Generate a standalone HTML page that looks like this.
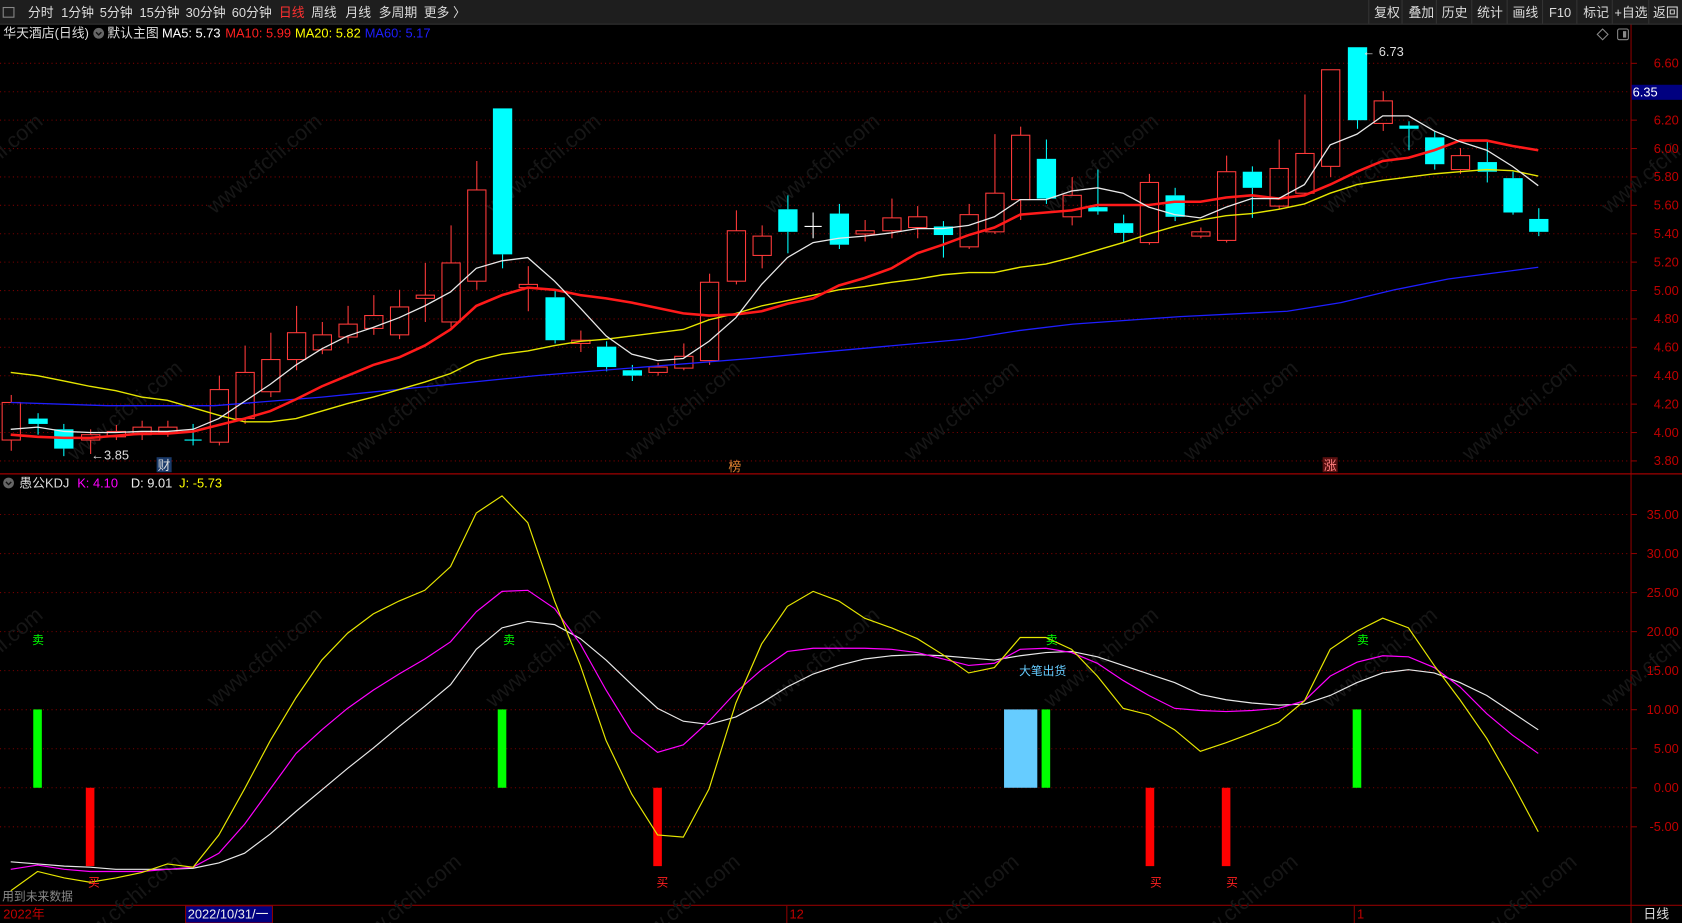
<!DOCTYPE html>
<html><head><meta charset="utf-8">
<style>
html,body{margin:0;padding:0;background:#000;width:1682px;height:923px;overflow:hidden}
svg{display:block}
text{font-family:"Liberation Sans","Noto Sans CJK SC",sans-serif;}
</style></head><body>
<svg id="s" width="1682" height="923" viewBox="0 0 1568 860" preserveAspectRatio="none" xmlns="http://www.w3.org/2000/svg">
<rect width="1568" height="860" fill="#000"/>
<rect x="0" y="0" width="1568" height="22" fill="#1e1e1e"/>
<line x1="0" y1="22.5" x2="1568" y2="22.5" stroke="#3a3a3a"/>
<rect x="3" y="7" width="10" height="9" fill="none" stroke="#888" stroke-width="1"/>
<g font-size="12" fill="#ddd">
<text x="26" y="16">分时</text><text x="57" y="16">1分钟</text><text x="93" y="16">5分钟</text><text x="130" y="16">15分钟</text><text x="173" y="16">30分钟</text><text x="216" y="16">60分钟</text>
<text x="260" y="16" fill="#ff3030">日线</text><text x="290" y="16">周线</text><text x="322" y="16">月线</text><text x="353" y="16">多周期</text><text x="395" y="16">更多 〉</text>
<text x="1281" y="16">复权</text><text x="1313" y="16">叠加</text><text x="1344" y="16">历史</text><text x="1377" y="16">统计</text><text x="1410" y="16">画线</text><text x="1444" y="16">F10</text><text x="1476" y="16">标记</text><text x="1505" y="16">+自选</text><text x="1541" y="16">返回</text>
</g>
<g stroke="#333"><line x1="1276" y1="0" x2="1276" y2="22"/><line x1="1307" y1="0" x2="1307" y2="22"/><line x1="1339" y1="0" x2="1339" y2="22"/><line x1="1372" y1="0" x2="1372" y2="22"/><line x1="1405" y1="0" x2="1405" y2="22"/><line x1="1438" y1="0" x2="1438" y2="22"/><line x1="1470" y1="0" x2="1470" y2="22"/><line x1="1503" y1="0" x2="1503" y2="22"/><line x1="1537" y1="0" x2="1537" y2="22"/></g>
<g font-size="12">
<text x="3" y="35" fill="#ddd">华天酒店(日线)</text>
<circle cx="92" cy="31" r="5" fill="#666"/><path d="M89.5 30l2.5 2.5 2.5-2.5" stroke="#111" fill="none" stroke-width="1.3"/>
<text x="100" y="35" fill="#ddd">默认主图</text>
<text x="151" y="35" fill="#fff">MA5: 5.73</text>
<text x="210" y="35" fill="#ff2020">MA10: 5.99</text>
<text x="275" y="35" fill="#ffff00">MA20: 5.82</text>
<text x="340" y="35" fill="#1e1eff">MA60: 5.17</text>
</g>
<path d="M1494 27l5 5-5 5-5-5z" fill="none" stroke="#888"/>
<rect x="1508" y="27" width="10" height="10" rx="1.5" fill="none" stroke="#888"/><rect x="1513" y="29" width="3" height="6" fill="#888"/>
<line x1="1520.5" y1="23" x2="1520.5" y2="860" stroke="#8b0000"/>
<line x1="0" y1="441.5" x2="1568" y2="441.5" stroke="#a00000" stroke-width="1.2"/>
<line x1="0" y1="843.5" x2="1568" y2="843.5" stroke="#8b0000"/>
<g id="grid"></g>
<g id="wm" font-size="20" fill="#161616"></g>
<g id="candles"></g>
<g id="lines" fill="none"></g>
<g id="kdj" fill="none"></g>
<g font-size="12" fill="#c00000" text-anchor="end" id="plab"></g>
<rect x="1521" y="79" width="47" height="14" fill="#000080"/>
<text x="1522" y="90" font-size="12" fill="#fff">6.35</text>
<text x="1270" y="52" font-size="12" fill="#ddd">← 6.73</text>
<text x="85" y="428" font-size="12" fill="#ddd">←3.85</text>
<rect x="146" y="426" width="14" height="14" fill="#1a3a6a"/><text x="147" y="438" font-size="12" fill="#ddd">财</text>
<text x="679" y="439" font-size="12" fill="#e08030">榜</text>
<rect x="1233" y="426" width="14" height="14" fill="#5a1010"/><text x="1234" y="438" font-size="12" fill="#ff8080">涨</text>
<circle cx="8" cy="450" r="5" fill="#666"/><path d="M5.5 449l2.5 2.5 2.5-2.5" stroke="#111" fill="none" stroke-width="1.3"/>
<g font-size="12"><text x="18" y="454" fill="#ddd">愚公KDJ</text><text x="72" y="454" fill="#ff00ff">K: 4.10</text><text x="122" y="454" fill="#eee">D: 9.01</text><text x="167" y="454" fill="#ffff00">J: -5.73</text></g>
<g font-size="11">
<text x="30" y="600" fill="#00ff00">卖</text><text x="469" y="600" fill="#00ff00">卖</text><text x="975" y="600" fill="#00ff00">卖</text><text x="1265" y="600" fill="#00ff00">卖</text>
<text x="82" y="826" fill="#ff2020">买</text><text x="612" y="826" fill="#ff2020">买</text><text x="1072" y="826" fill="#ff2020">买</text><text x="1143" y="826" fill="#ff2020">买</text>
<text x="950" y="629" fill="#66ccff">大笔出货</text>
</g>
<text x="2" y="839" font-size="11" fill="#888">用到未来数据</text>
<text x="3" y="856" font-size="12" fill="#c00000">2022年</text>
<rect x="173" y="844" width="81" height="16" fill="#000080" stroke="#8b0000"/>
<text x="175" y="856" font-size="12" fill="#eee">2022/10/31/一</text>
<line x1="733.5" y1="844" x2="733.5" y2="860" stroke="#8b0000"/><text x="736" y="856" font-size="12" fill="#c00000">12</text>
<line x1="1262.5" y1="844" x2="1262.5" y2="860" stroke="#8b0000"/><text x="1265" y="856" font-size="12" fill="#c00000">1</text>
<text x="1532" y="856" font-size="12" fill="#ddd">日线</text>
</svg>
<script>
const NS="http://www.w3.org/2000/svg";
function el(p,t,a){const e=document.createElementNS(NS,t);for(const k in a)e.setAttribute(k,a[k]);p.appendChild(e);return e;}
const g=document.getElementById('grid'),pl=document.getElementById('plab');
for(let i=0;i<=14;i++){const p=3.8+i*0.2;const y=403-(p-4)*132.3;
 el(g,'line',{x1:0,y1:y,x2:1520,y2:y,stroke:'#7a0000','stroke-dasharray':'1,3'});
 el(g,'line',{x1:1520,y1:y,x2:1526,y2:y,stroke:'#8b0000'});
 if(Math.abs(p-6.4)>0.01){const t=el(pl,'text',{x:1565,y:y+4});t.textContent=p.toFixed(2);}}
for(let v=-5;v<=35;v+=5){const y=734-v*7.275;
 el(g,'line',{x1:0,y1:y,x2:1520,y2:y,stroke:'#7a0000','stroke-dasharray':'1,3'});
 el(g,'line',{x1:1520,y1:y,x2:1526,y2:y,stroke:'#8b0000'});
 const t=el(pl,'text',{x:1565,y:y+4});t.textContent=v.toFixed(2);}
const wm=document.getElementById('wm');
for(let r=0;r<4;r++)for(let c=0;c<7;c++){const x=c*260+ (r%2)*130-60,y=200+r*230;
 const t=el(wm,'text',{x:x,y:y,transform:`rotate(-40 ${x} ${y})`});t.textContent='www.cfchi.com';}
const C=[[10,1,375,410,368,420],[35,0,390,395,385,405],[59,0,400,418,395,425],[84,1,405,410,400,423],[108,1,402,407,396,410],[132,1,398,405,392,410],[156,1,398,403,392,407],[180,2,409,411,395,415],[204,1,363,412,350,415],[228,1,347,390,322,395],[252,1,335,365,310,370],[276,1,310,335,285,345],[300,1,312,326,300,330],[324,1,302,314,285,320],[348,1,294,306,275,312],[372,1,286,312,270,316],[396,1,275,278,245,300],[420,1,245,300,210,305],[444,1,177,262,150,270],[468,0,101,237,101,250],[492,1,265,268,248,290],[517,0,277,317,270,320],[541,1,317,320,308,328],[565,0,323,342,318,346],[589,0,345,350,340,355],[613,1,342,347,338,350],[637,1,332,343,320,345],[661,1,263,336,255,340],[686,1,215,262,196,265],[710,1,220,238,210,250],[734,0,195,216,182,236],[758,2,210,212,198,222],[782,0,199,228,190,232],[806,1,215,218,205,225],[831,1,203,215,185,222],[855,1,202,212,192,222],[879,0,211,219,206,240],[903,1,200,230,190,232],[927,1,180,216,125,218],[951,1,126,186,118,205],[975,0,148,185,130,190],[999,1,182,202,165,210],[1023,0,193,197,158,200],[1047,0,208,217,200,226],[1071,1,170,226,162,228],[1095,0,182,202,175,206],[1119,1,216,220,212,222],[1143,1,160,224,145,226],[1167,0,160,175,155,203],[1192,1,157,192,130,195],[1216,1,143,180,88,182],[1240,1,65,155,65,165],[1265,0,44,112,44,120],[1289,1,94,115,85,122],[1313,0,117,120,113,140],[1337,0,128,153,122,158],[1361,1,145,158,138,162],[1386,0,151,160,131,170],[1410,0,166,198,160,200],[1434,0,204,216,194,220]];
const cg=document.getElementById('candles');
C.forEach(([x,t,a,b,h,l])=>{
 if(t==2){el(cg,'line',{x1:x,y1:h,x2:x,y2:l,stroke:x==758?'#fff':'#00ffff'});el(cg,'line',{x1:x-8,y1:a+1,x2:x+8,y2:a+1,stroke:x==758?'#fff':'#00ffff'});return;}
 const col=t?'#ff3a3a':'#00ffff';
 el(cg,'line',{x1:x+.5,y1:h,x2:x+.5,y2:a,stroke:col});el(cg,'line',{x1:x+.5,y1:b,x2:x+.5,y2:l,stroke:col});
 if(t)el(cg,'rect',{x:x-8,y:a,width:17,height:Math.max(b-a,1),fill:'none',stroke:col});
 else el(cg,'rect',{x:x-8.5,y:a,width:18,height:Math.max(b-a,1.5),fill:col});
});
const X=[10,35,60,84,108,132,156,180,204,228,252,276,300,324,348,372,396,420,444,468,492,517,541,565,589,613,637,661,686,710,734,758,782,806,831,855,879,903,927,951,975,999,1023,1047,1071,1095,1119,1143,1167,1192,1216,1240,1265,1289,1313,1337,1361,1386,1410,1434];
function line(par,ys,col,w){el(par,'polyline',{points:ys.map((y,i)=>X[i]+','+y).join(' '),stroke:col,'stroke-width':w});}
const lg=document.getElementById('lines');
el(lg,'polyline',{points:'10,375 100,378 200,378 300,370 400,360 500,350 600,342 700,334 800,325 900,316 950,308 1000,302 1100,295 1200,290 1250,282 1300,270 1350,260 1434,249',stroke:'#1e1eff','stroke-width':1.2});
line(lg,[347,350,355,360,364,370,373,380,387,393,393,390,383,376,370,363,356,348,336,330,327,322,318,316,313,310,307,298,292,285,280,275,270,267,263,260,256,254,254,249,246,240,233,226,218,211,205,201,199,195,190,180,172,168,165,162,160,158,159,164],'#e6e600',1.3);
line(lg,[405,407,408,408,406,404,404,402,396,390,383,372,360,350,340,333,322,307,285,275,268,270,275,278,282,287,292,294,293,290,283,278,266,259,250,236,228,219,212,200,198,196,191,191,191,188,188,184,182,185,182,172,160,150,147,140,131,131,136,140],'#ff1a1a',2.4);
line(lg,[400,398,402,403,403,402,402,400,390,374,358,340,325,313,305,296,285,272,250,243,240,262,287,313,330,336,334,318,296,265,240,226,222,220,217,213,213,210,202,186,186,178,175,180,193,200,203,193,185,185,172,135,125,108,108,122,132,140,155,173],'#e8e8e8',1.2);
const kg=document.getElementById('kdj');
[[35,'#00ff00',661,73],[468,'#00ff00',661,73],[975,'#00ff00',661,73],[1265,'#00ff00',661,73],[84,'#ff0000',734,73],[613,'#ff0000',734,73],[1072,'#ff0000',734,73],[1143,'#ff0000',734,73]].forEach(([x,c,y,h])=>el(kg,'rect',{x:x-4,y:y,width:8,height:h,fill:c}));
el(kg,'rect',{x:936,y:661,width:31,height:73,fill:'#66ccff'});
line(kg,[803,805,807,808,810,810,810,809,804,795,777,756,736,716,697,677,658,638,605,585,579,582,595,615,638,660,672,675,668,655,640,628,620,614,611,610,611,613,615,611,608,607,612,620,628,636,647,652,655,657,656,648,636,627,624,627,636,648,664,680],'#e8e8e8',1.1);
line(kg,[810,806,810,812,812,812,810,808,795,768,735,702,680,660,643,628,614,598,570,551,550,567,600,643,682,701,694,672,645,624,607,604,604,604,605,608,614,620,618,605,604,608,618,634,648,660,662,663,662,660,653,630,617,611,612,622,640,665,685,702],'#ff00ff',1.1);
line(kg,[830,812,818,822,818,813,805,808,778,735,690,650,615,590,572,560,550,528,478,462,487,560,620,690,740,778,780,735,655,600,565,551,560,576,585,595,610,627,622,594,594,605,630,660,666,680,700,692,683,673,653,605,588,576,585,620,652,688,730,775],'#e6e600',1.1);
</script>
</body></html>
